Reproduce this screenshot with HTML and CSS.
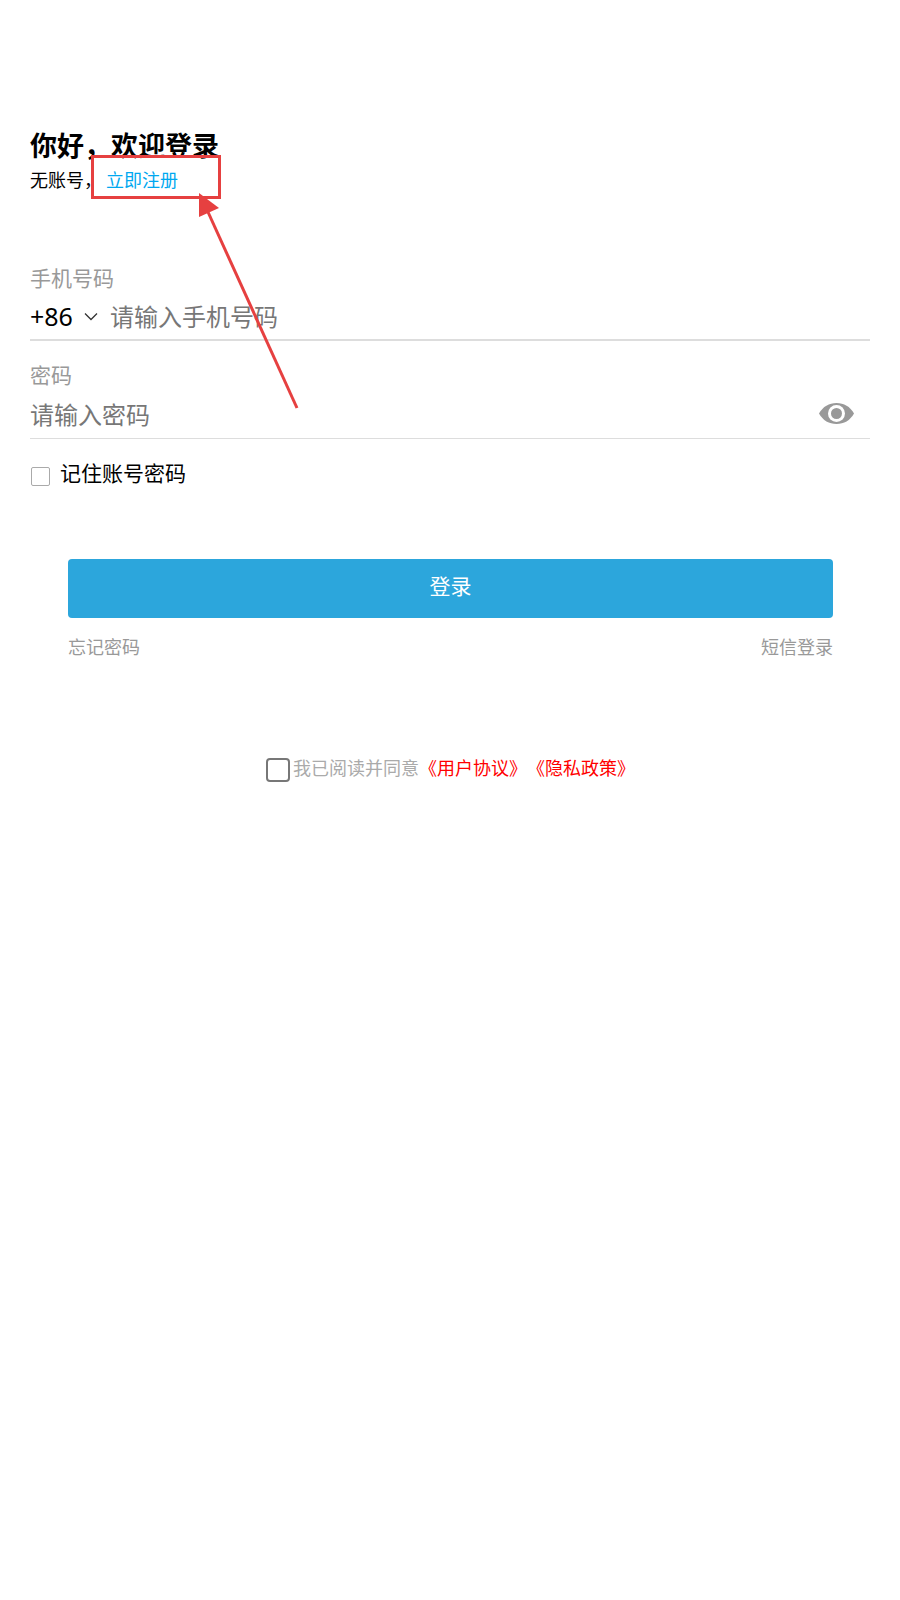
FILE: index.html
```html
<!DOCTYPE html>
<html lang="zh-CN">
<head>
    <meta charset="UTF-8">
    <meta name="viewport" content="width=device-width, initial-scale=1.0">
    <title>登录</title>
    <link rel="stylesheet" href="styles.css">
</head>
<body>
    <div class="page">
        <h1 class="title">你好，欢迎登录</h1>
        <p class="subtitle">无账号，<a class="register-link">立即注册</a></p>

        <div class="field">
            <label class="field-label">手机号码</label>
            <div class="field-row">
                <span class="area-code">+86</span>
                <svg class="chevron" width="14" height="9" viewBox="0 0 14 9">
                    <path d="M1 1.5 L7 7.5 L13 1.5" fill="none" stroke="#333" stroke-width="1.3"/>
                </svg>
                <span class="placeholder">请输入手机号码</span>
            </div>
        </div>

        <div class="field field-password">
            <label class="field-label">密码</label>
            <div class="field-row">
                <span class="placeholder">请输入密码</span>
                <svg class="eye" width="35" height="21" viewBox="0 0 35 21">
                    <path d="M0 10.5 C4 3.5 10 0 17.5 0 C25 0 31 3.5 35 10.5 C31 17.5 25 21 17.5 21 C10 21 4 17.5 0 10.5 Z" fill="#999"/>
                    <circle cx="17.5" cy="10.5" r="8.5" fill="#fff"/>
                    <circle cx="17.5" cy="10.5" r="5.5" fill="#999"/>
                </svg>
            </div>
        </div>

        <div class="remember">
            <span class="check-small"></span>
            <span>记住账号密码</span>
        </div>

        <div class="actions">
            <button class="login-btn">登录</button>
            <div class="links">
                <a>忘记密码</a>
                <a>短信登录</a>
            </div>
        </div>

        <div class="agreement">
            <span class="check-large"></span>
            <span>我已阅读并同意</span><a class="policy">《用户协议》《隐私政策》</a>
        </div>
    </div>

    <!-- annotation drawn over the page -->
    <div class="note-box"></div>
    <svg class="note-arrow" width="900" height="500" viewBox="0 0 900 500">
        <line x1="297" y1="408" x2="208" y2="212" stroke="#e64040" stroke-width="3"/>
        <polygon points="199,193 199,217 219,208" fill="#e64040"/>
    </svg>
</body>
</html>
```

FILE: styles.css
```css
* {
    box-sizing: border-box;
}

body {
    margin: 0;
    background: #fff;
    color: #000;
    font-family: "Noto Sans CJK SC", "Noto Sans", sans-serif;
    text-spacing-trim: space-all;
}

.page {
    position: relative;
    height: 1600px;
    padding: 125px 30px 0;
}

.title {
    margin: 0;
    font-size: 27px;
    line-height: 40px;
    font-weight: 700;
}

.subtitle {
    margin: 0;
    font-size: 18px;
    line-height: 28px;
}

.register-link {
    color: #00a8f0;
    margin-left: 4px;
}

.field {
    margin-top: 69px;
    border-bottom: 2px solid #ddd;
}

.field-password {
    margin-top: 18px;
    border-bottom-width: 1px;
}

.field-label {
    display: block;
    color: #999;
    font-size: 21px;
    line-height: 30px;
}

.field-row {
    display: flex;
    align-items: center;
    height: 47px;
}

.field-password .field-row {
    justify-content: space-between;
    height: 49px;
    padding: 0 16px 0 0;
}

.area-code {
    font-family: "Noto Sans", sans-serif;
    font-size: 25px;
}

.chevron {
    margin: 2px 12px 0 11px;
}

.placeholder {
    color: #777;
    font-size: 24px;
}

.remember {
    display: flex;
    align-items: center;
    gap: 10px;
    margin-top: 17px;
    padding-left: 1px;
    font-size: 21px;
    line-height: 32px;
}

.check-small {
    width: 19px;
    height: 19px;
    margin-top: 8px;
    border: 1px solid #aaa;
    border-radius: 2px;
}

.actions {
    margin: 71px 37px 0 38px;
}

.login-btn {
    display: block;
    width: 100%;
    height: 59px;
    padding: 0 0 8px;
    border: 0;
    border-radius: 4px;
    background: #2ca6dc;
    color: #fff;
    font-family: inherit;
    font-size: 21px;
}

.links {
    display: flex;
    justify-content: space-between;
    margin-top: 14px;
    color: #999;
    font-size: 18px;
    line-height: 28px;
}

.agreement {
    display: flex;
    margin-top: 93px;
    padding-left: 236px;
    color: #aaa;
    font-size: 18px;
    line-height: 28px;
}

.check-large {
    width: 24px;
    height: 24px;
    margin: 5px 3px 0 0;
    border: 2px solid #777;
    border-radius: 4px;
}

.policy {
    color: #f00;
}

.note-box {
    position: absolute;
    left: 91px;
    top: 155px;
    width: 130px;
    height: 44px;
    border: 3px solid #e64040;
}

.note-arrow {
    position: absolute;
    left: 0;
    top: 0;
    pointer-events: none;
}
```
